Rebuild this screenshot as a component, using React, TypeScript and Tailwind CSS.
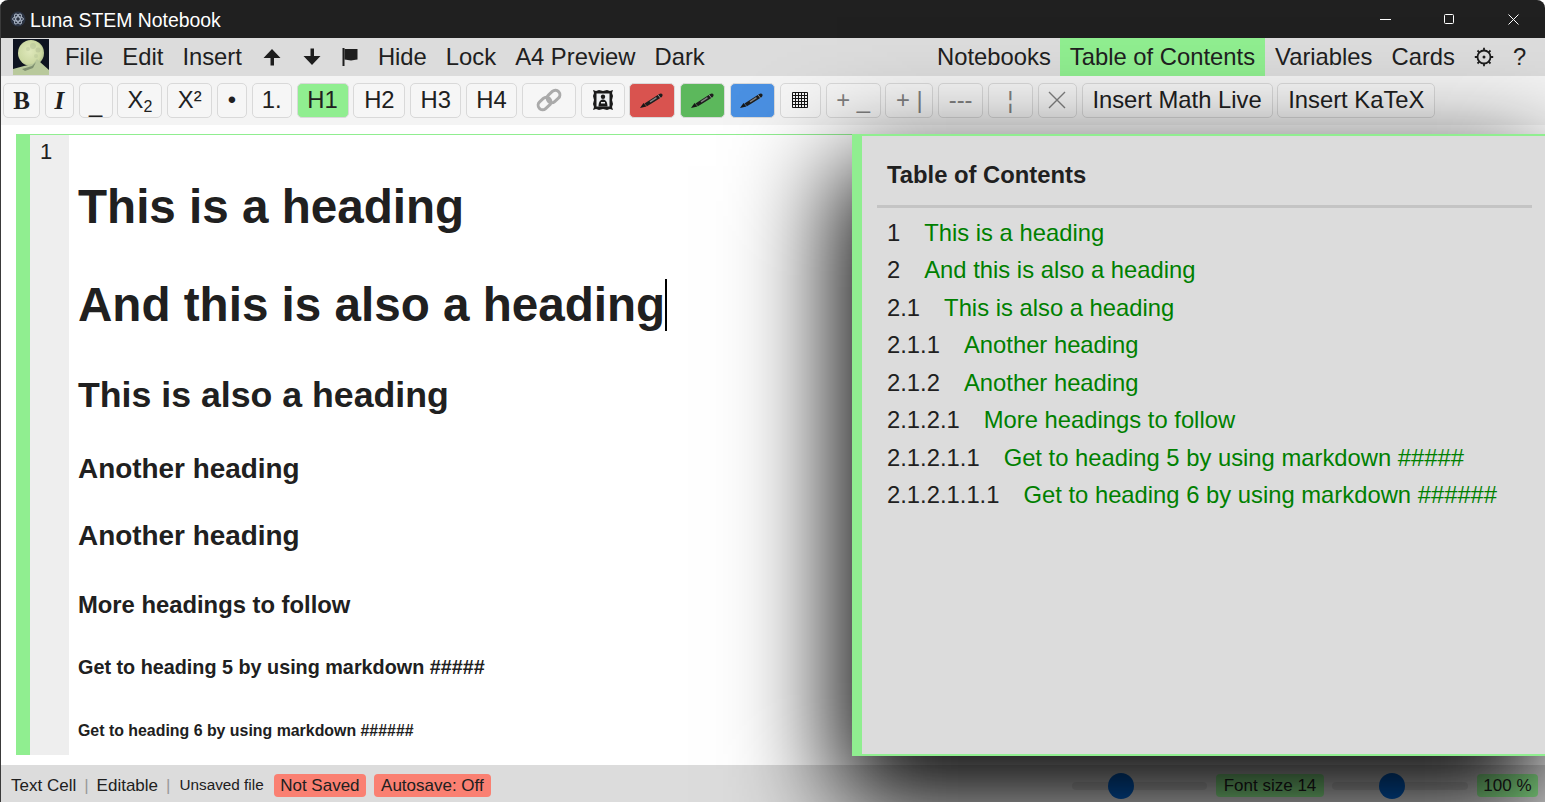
import { ReactNode } from "react";

const Crayon = () => (
  <svg width="26" height="20" viewBox="0 0 26 20" fill="none">
    <path d="M1 18l6.500-1.500 -3-3.500z" fill="#151515" />
    <path d="M5.500 13.500L19.500 4.500c1.600-1 3-1.400 3.800-.3.800 1.100 0 2.400-1.600 3.500L8 16.300z" fill="#1d1d1d" />
    <path d="M11 11.800l6.500-4.200" stroke="#fff" strokeWidth="1.400" opacity=".45" />
    <path d="M19 4.800l2.600 3.400" stroke="#fff" strokeWidth="1" opacity=".5" />
  </svg>
);

const LinkIcon = () => (
  <svg width="26" height="24" viewBox="0 0 26 24" fill="none" stroke="#aaa" strokeWidth="3">
    <rect x="1.500" y="11" width="14" height="9" rx="4.500" transform="rotate(-42 8.500 15.500)" />
    <rect x="10.500" y="4" width="14" height="9" rx="4.500" transform="rotate(-42 17.500 8.500)" />
  </svg>
);

const FrameIcon = () => (
  <svg width="20" height="20" viewBox="0 0 20 20">
    <path d="M0 0l3 1 3-1 4 1 4-1 3 1 3-1-1 3 1 3-1 4 1 4-1 3 1 3-3-1-3 1-4-1-4 1-3-1-3 1 1-3-1-3 1-4-1-4 1-3z" fill="#1a1a1a" />
    <rect x="3.500" y="3.500" width="13" height="13" fill="#eef0f2" />
    <circle cx="10" cy="6.800" r="2.200" fill="#1a1a1a" />
    <path d="M5.500 16.500c0-4.500 2-7 4.500-7s4.500 2.500 4.500 7z" fill="#1a1a1a" />
    <rect x="8" y="12" width="4" height="1.500" fill="#eef0f2" />
  </svg>
);

const GridIcon = () => (
  <svg width="16" height="16" viewBox="0 0 16 16" stroke="#151515" strokeWidth="1" fill="none">
    <path d="M.5.5h15v15H.5zM.5 3.500h15M.5 6.500h15M.5 9.500h15M.5 12.500h15M3.500.5v15M6.500.5v15M9.500.5v15M12.500.5v15" />
  </svg>
);

const ArrowUp = () => (
  <svg width="18" height="18" viewBox="0 0 18 18" fill="#1d1d1d">
    <path d="M9 1l8.500 9H11v7.500H7.500V10H.5z" />
  </svg>
);

const ArrowDown = () => (
  <svg width="18" height="18" viewBox="0 0 18 18" fill="#1d1d1d">
    <path d="M7.500.5H11V8h6.500L9 17 .5 8h7z" />
  </svg>
);

const FlagIcon = () => (
  <svg width="16" height="18" viewBox="0 0 16 18" fill="#1d1d1d">
    <path d="M.5 0H2.500v18H.5z" />
    <path d="M2.500 1h13v10.500c-3 0-4 1-6.500 1s-4-1-6.500-1z" />
  </svg>
);

const GearIcon = () => (
  <svg width="20" height="20" viewBox="0 0 20 20" fill="none" stroke="#1d1d1d">
    <circle cx="10" cy="10" r="6.500" strokeWidth="1.800" />
    <circle cx="10" cy="10" r="1.500" fill="#1d1d1d" stroke="none" />
    <path strokeWidth="1.800" d="M10 .8v2.500M10 16.700v2.500M.8 10h2.500M16.700 10h2.500M3.500 3.500l1.800 1.800M14.700 14.700l1.800 1.800M3.500 16.500l1.800-1.800M14.700 5.300l1.800-1.800" />
  </svg>
);

const MoonLogo = () => (
  <svg width="36" height="36" viewBox="0 0 36 36" className="shrink-0">
    <defs>
      <radialGradient id="moon" cx="45%" cy="45%" r="60%">
        <stop offset="0%" stopColor="#dfe8bb" />
        <stop offset="75%" stopColor="#cbd8a2" />
        <stop offset="100%" stopColor="#a8b888" />
      </radialGradient>
    </defs>
    <rect width="36" height="36" fill="#0e1420" />
    <circle cx="18" cy="14" r="13" fill="url(#moon)" />
    <circle cx="20" cy="7" r="3" fill="#a7b58b" opacity=".35" />
    <circle cx="25" cy="11" r="2.500" fill="#a7b58b" opacity=".4" />
    <circle cx="15" cy="10" r="2" fill="#a7b58b" opacity=".3" />
    <circle cx="23" cy="17" r="2" fill="#a7b58b" opacity=".3" />
    <path d="M0 30l11-3 9-2 4-5 3 3 9 8v5H0z" fill="#b9c99c" />
    <path d="M9 30l10-3 4-4-3 6-8 3z" fill="#7f9070" />
  </svg>
);

const toolClass =
  "h-[35px] shrink-0 flex items-center justify-center rounded-[5px] border border-[#d9d9d9] text-[23.8px] leading-none text-[#202020]";

function Tool({ w, bg = "bg-[#f6f6f6]", children }: { w: string; bg?: string; children: ReactNode }) {
  return <div className={`${toolClass} ${w} ${bg}`}>{children}</div>;
}

function MenuBar() {
  return (
    <div className="h-[38px] shrink-0 bg-[#dcdcdc] flex items-center text-[23.8px] text-[#202020] pl-[13px] pr-[19px]">
      <MoonLogo />
      <div className="flex items-center gap-[19px] ml-[16px]">
        <span>File</span>
        <span>Edit</span>
        <span>Insert</span>
        <span className="w-[23px] flex justify-center"><ArrowUp /></span>
        <span className="w-[19px] flex justify-center"><ArrowDown /></span>
        <span className="w-[18px] flex justify-center"><FlagIcon /></span>
        <span>Hide</span>
        <span>Lock</span>
        <span>A4 Preview</span>
        <span>Dark</span>
      </div>
      <div className="ml-auto flex items-center h-full">
        <span>Notebooks</span>
        <span className="ml-[9px] h-full px-[10px] bg-[#90ee90] flex items-center">Table of Contents</span>
        <span className="ml-[10px]">Variables</span>
        <span className="ml-[19px]">Cards</span>
        <span className="ml-[19px] w-[20px] flex justify-center"><GearIcon /></span>
        <span className="ml-[19px] w-[13px]">?</span>
      </div>
    </div>
  );
}

function ToolBar() {
  return (
    <div className="h-[49px] shrink-0 bg-[#f4f4f4] flex items-center gap-[4.800px] pl-[3px] pb-[1px]">
      <Tool w="w-[37px]"><span className="font-bold text-[25px] font-['Liberation_Serif',serif]">B</span></Tool>
      <Tool w="w-[29px]"><span className="font-bold italic text-[25px] font-['Liberation_Serif',serif]">I</span></Tool>
      <Tool w="w-[34px]"><span className="mt-[8px]">_</span></Tool>
      <Tool w="w-[45px]"><span>X<sub className="text-[16px] bottom-0 align-[-4px]">2</sub></span></Tool>
      <Tool w="w-[45px]">X²</Tool>
      <Tool w="w-[30px]">•</Tool>
      <Tool w="w-[40px]">1.</Tool>
      <Tool w="w-[52px]" bg="bg-[#90ee90]">H1</Tool>
      <Tool w="w-[52px]">H2</Tool>
      <Tool w="w-[51px]">H3</Tool>
      <Tool w="w-[51px]">H4</Tool>
      <Tool w="w-[54px]"><LinkIcon /></Tool>
      <Tool w="w-[44px]"><FrameIcon /></Tool>
      <Tool w="w-[46px]" bg="bg-[#d9534f]"><Crayon /></Tool>
      <Tool w="w-[45px]" bg="bg-[#5cb85c]"><Crayon /></Tool>
      <Tool w="w-[45px]" bg="bg-[#4a90e2]"><Crayon /></Tool>
      <Tool w="w-[41px]"><GridIcon /></Tool>
      <Tool w="w-[55px]"><span className="text-[#808080]">+ _</span></Tool>
      <Tool w="w-[48px]"><span className="text-[#808080]">+ |</span></Tool>
      <Tool w="w-[45px]"><span className="text-[#808080]">---</span></Tool>
      <Tool w="w-[45px]"><span className="text-[#808080]">¦</span></Tool>
      <Tool w="w-[39px]">
        <svg width="18" height="18" viewBox="0 0 18 18" stroke="#808080" strokeWidth="1.400"><path d="M1 1l16 16M17 1L1 17" /></svg>
      </Tool>
      <Tool w="w-[191px]">Insert Math Live</Tool>
      <Tool w="w-[158px]">Insert KaTeX</Tool>
    </div>
  );
}

const headings = [
  { text: "This is a heading", cls: "text-[47.6px] mt-[45px]", caret: false },
  { text: "And this is also a heading", cls: "text-[47.6px] mt-[43px]", caret: true },
  { text: "This is also a heading", cls: "text-[35.7px] mt-[43px]", caret: false },
  { text: "Another heading", cls: "text-[27.9px] mt-[37px]", caret: false },
  { text: "Another heading", cls: "text-[27.9px] mt-[34px]", caret: false },
  { text: "More headings to follow", cls: "text-[23.8px] mt-[39px]", caret: false },
  { text: "Get to heading 5 by using markdown #####", cls: "text-[19.8px] mt-[38px]", caret: false },
  { text: "Get to heading 6 by using markdown ######", cls: "text-[15.9px] mt-[43px]", caret: false },
];

const tocRows = [
  ["1", "This is a heading"],
  ["2", "And this is also a heading"],
  ["2.1", "This is also a heading"],
  ["2.1.1", "Another heading"],
  ["2.1.2", "Another heading"],
  ["2.1.2.1", "More headings to follow"],
  ["2.1.2.1.1", "Get to heading 5 by using markdown #####"],
  ["2.1.2.1.1.1", "Get to heading 6 by using markdown ######"],
];

function Editor() {
  return (
    <div className="flex-1 bg-white pt-[9px] pl-[16px] min-h-0 pb-[10px]">
      <div className="h-full border-t border-[#90ee90] flex">
        <div className="w-[14px] bg-[#90ee90]" />
        <div className="w-[39px] bg-[#eeeeee] text-[22px] text-[#202020] pl-[10px] pt-[2px] leading-[30px]">1</div>
        <div className="pl-[9px] font-bold text-[#202020]">
          {headings.map((h, i) => (
            <div key={i} className={`leading-[1.15] flex items-center ${h.cls}`}>
              {h.text}
              {h.caret && <span className="w-[2px] h-[52px] bg-black" />}
            </div>
          ))}
        </div>
      </div>
    </div>
  );
}

function TocPanel() {
  return (
    <div className="absolute left-[852px] right-0 top-[134px] h-[622px] bg-[#dcdcdc] border-y-2 border-l-[10px] border-[#90ee90] shadow-[-7px_40px_100px_8px_#000] pl-[15px] pr-[13px]">
      <div className="h-[72px] border-b-[3px] border-[#c4c4c4] pl-[10px] pt-[23px] text-[23.8px] font-bold leading-[32px] text-[#202020]">
        Table of Contents
      </div>
      <div className="pl-[10px] pt-[6px] text-[23.8px]">
        {tocRows.map(([n, t]) => (
          <div key={n} className="flex h-[37.500px] items-center gap-[24px]">
            <span className="text-[#202020]">{n}</span>
            <span className="text-[#008000]">{t}</span>
          </div>
        ))}
      </div>
    </div>
  );
}

function Slider({ w, ml }: { w: string; ml: string }) {
  return (
    <div className={`h-[8px] rounded-full bg-[#c8c8c8] flex items-center ${w}`}>
      <div className={`h-[26px] w-[26px] shrink-0 rounded-full bg-[#0060c8] ${ml}`} />
    </div>
  );
}

function StatusBar() {
  return (
    <div className="h-[37px] shrink-0 bg-[#dcdcdc] flex items-center pt-[4px] pl-[11px] pr-[7px] text-[17px] text-[#202020]">
      <span>Text Cell</span>
      <span className="mx-[8px] text-[#999]">|</span>
      <span>Editable</span>
      <span className="ml-[8px] mr-[9px] text-[#999]">|</span>
      <span className="text-[15.300px]">Unsaved file</span>
      <span className="ml-[10px] h-[23px] px-[6.500px] rounded-[4px] bg-[#fa8072] flex items-center">Not Saved</span>
      <span className="ml-[8px] h-[23px] px-[7px] rounded-[4px] bg-[#fa8072] flex items-center">Autosave: Off</span>
      <div className="ml-auto flex items-center">
        <Slider w="w-[135px]" ml="ml-[36px]" />
        <span className="ml-[9px] h-[23px] px-[7.500px] rounded-[4px] bg-[#90ee90] flex items-center">Font size 14</span>
        <div className="ml-[8px]"><Slider w="w-[136px]" ml="ml-[47px]" /></div>
        <span className="ml-[9px] h-[23px] px-[6.500px] rounded-[4px] bg-[#90ee90] flex items-center">100 %</span>
      </div>
    </div>
  );
}

export default function App() {
  return (
    <div className="relative h-screen w-full overflow-hidden rounded-t-[8px] flex flex-col font-['Liberation_Sans',Arial,sans-serif]">
      <div className="h-[38px] shrink-0 bg-[#202020] flex items-center text-white text-[19.400px] pl-[10px]">
        <svg width="16" height="16" viewBox="0 0 16 16" fill="none" stroke="#a9b4c4" strokeWidth="1">
          <circle cx="8" cy="8" r="7.500" fill="#2b3342" stroke="none" />
          <ellipse cx="8" cy="8" rx="5.500" ry="2.200" />
          <ellipse cx="8" cy="8" rx="5.500" ry="2.200" transform="rotate(60 8 8)" />
          <ellipse cx="8" cy="8" rx="5.500" ry="2.200" transform="rotate(120 8 8)" />
        </svg>
        <span className="ml-[4px] mt-[3px]">Luna STEM Notebook</span>
        <div className="ml-auto flex items-center h-full">
          <div className="w-[64px] flex justify-center">
            <svg width="11" height="11" viewBox="0 0 11 11" stroke="#fff"><path d="M0 5.500h11" /></svg>
          </div>
          <div className="w-[64px] flex justify-center">
            <svg width="11" height="11" viewBox="0 0 11 11" stroke="#fff" fill="none"><rect x=".5" y=".5" width="9" height="9" rx="1" /></svg>
          </div>
          <div className="w-[64px] flex justify-center">
            <svg width="11" height="11" viewBox="0 0 11 11" stroke="#fff"><path d="M.5.5l10 10M10.500.5l-10 10" /></svg>
          </div>
        </div>
      </div>
      <MenuBar />
      <ToolBar />
      <Editor />
      <StatusBar />
      <TocPanel />
      <div className="absolute inset-y-0 left-0 w-[1px] bg-[#3a3a3a]" />
    </div>
  );
}
